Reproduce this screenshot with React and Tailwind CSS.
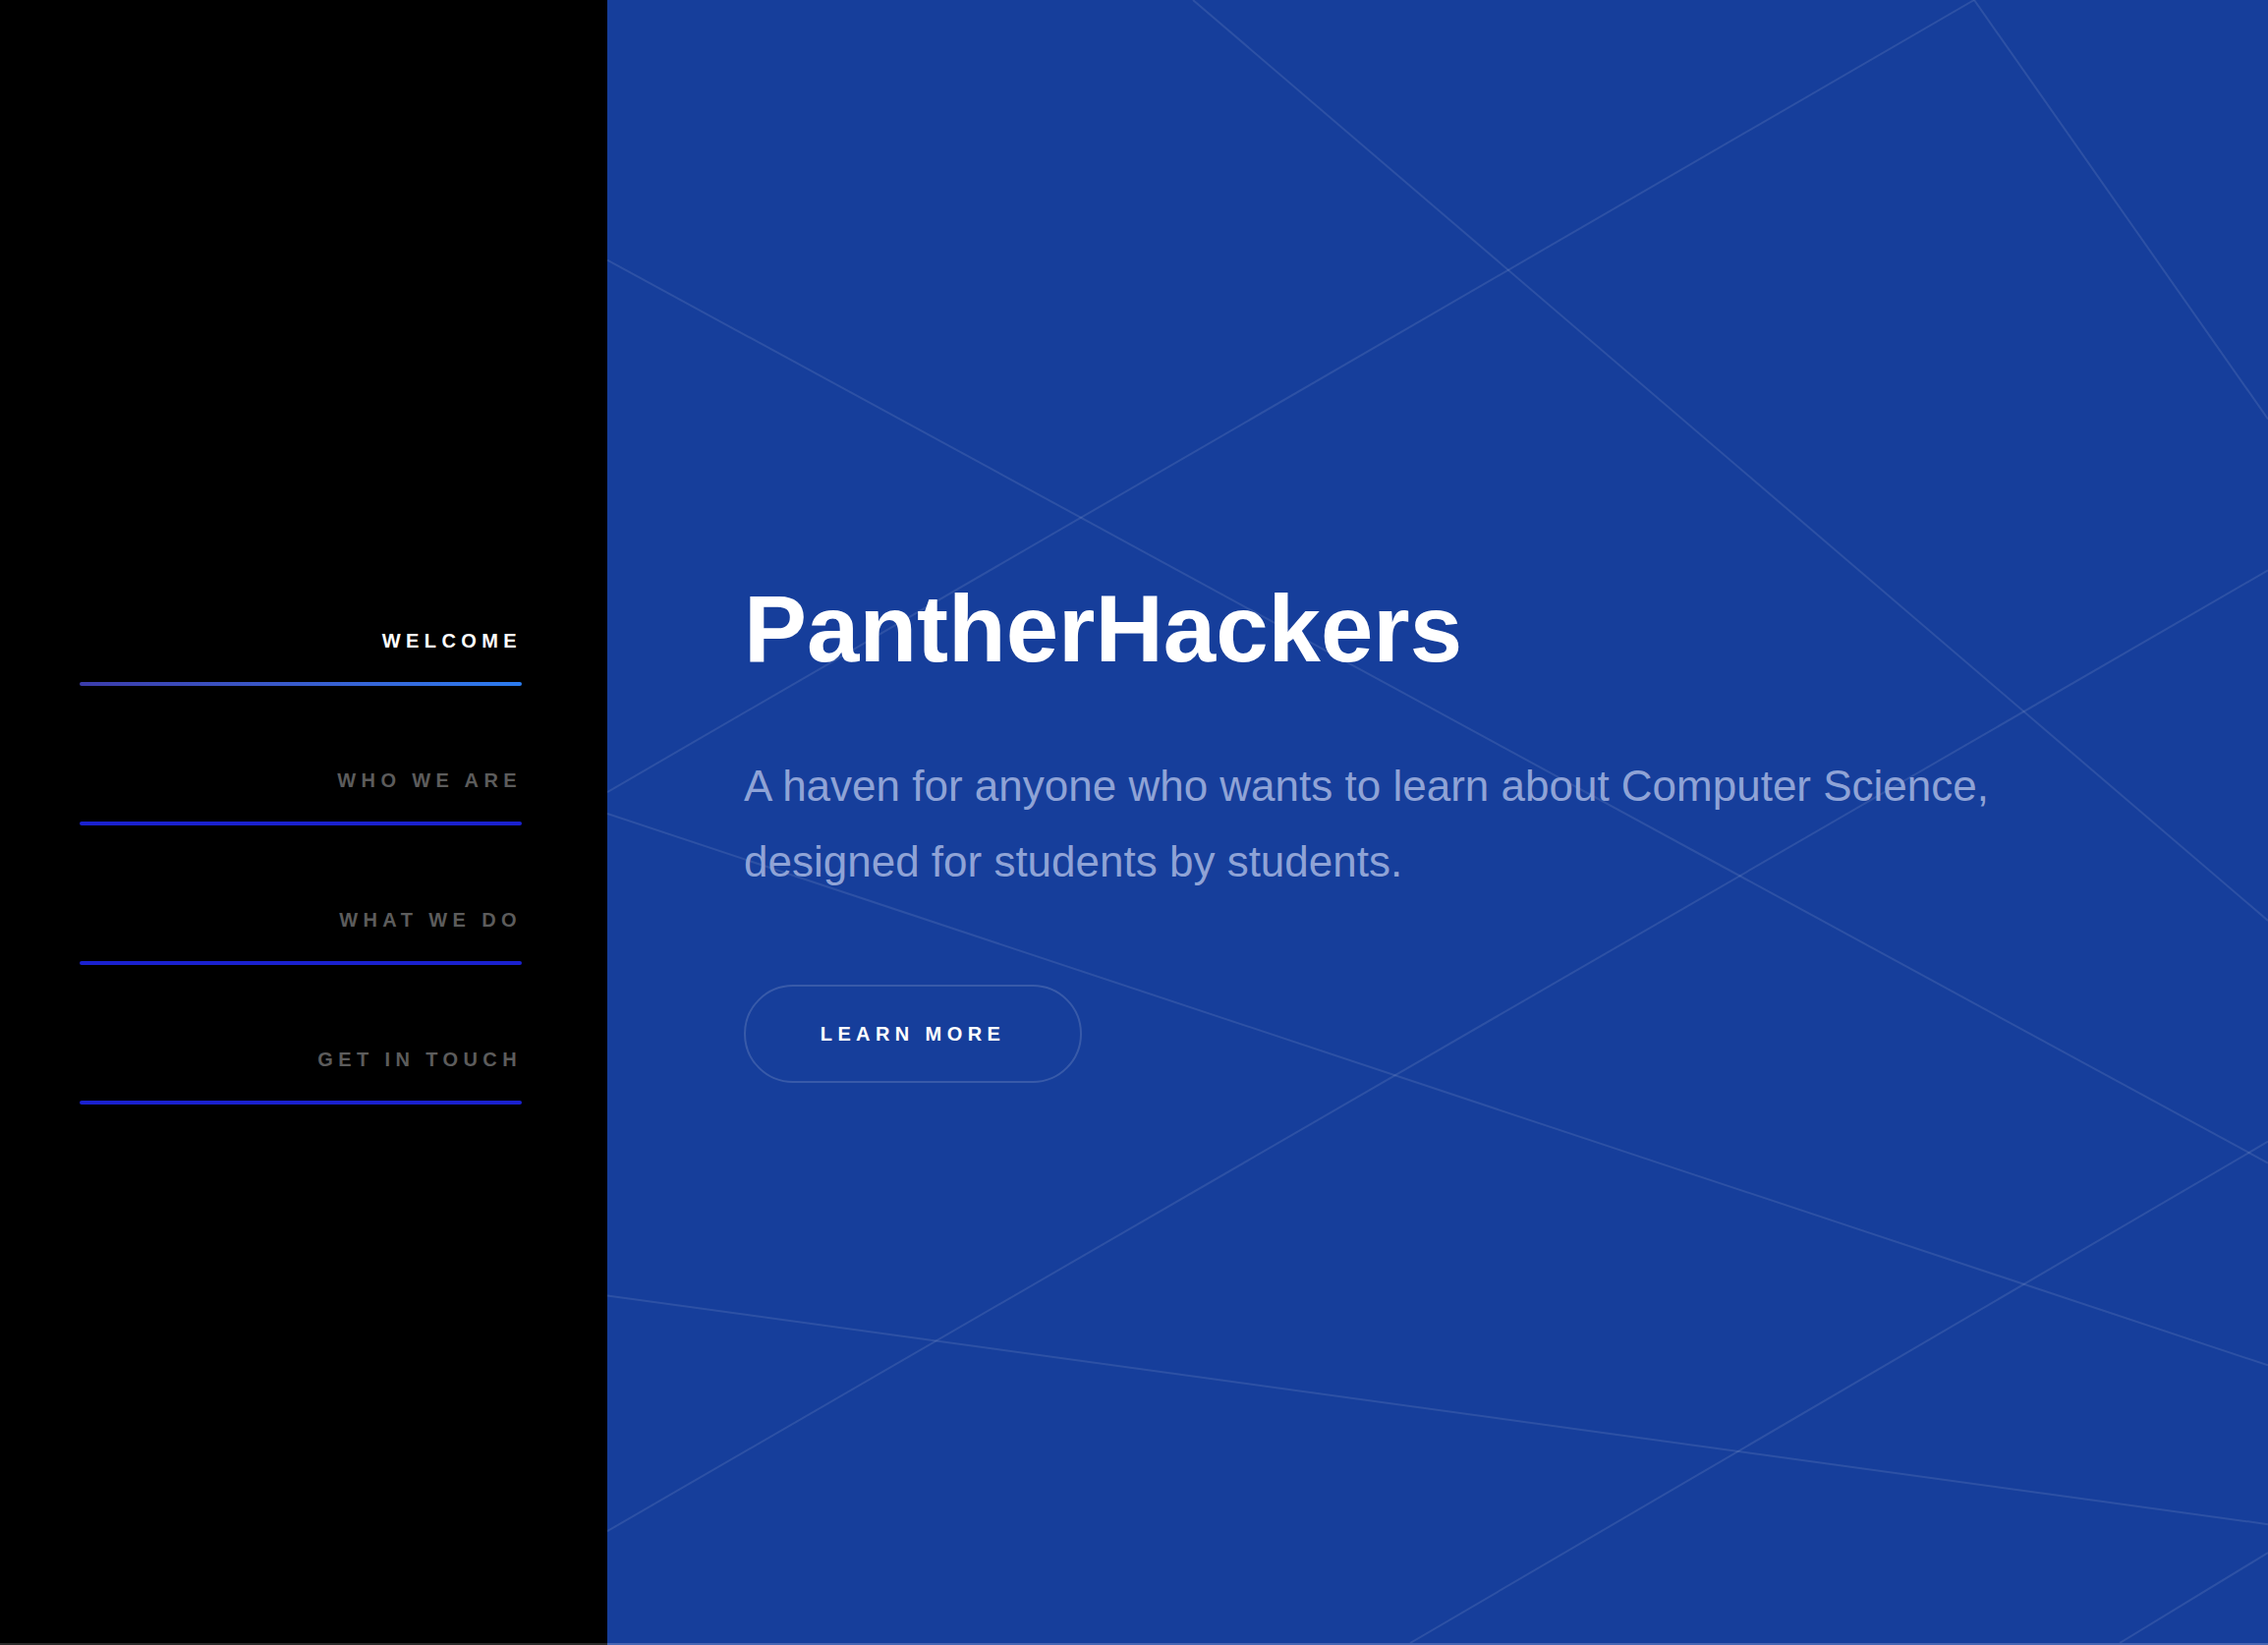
import React from 'react';

const navItems = [
  { label: 'WELCOME', active: true },
  { label: 'WHO WE ARE', active: false },
  { label: 'WHAT WE DO', active: false },
  { label: 'GET IN TOUCH', active: false },
];

// background strokes, in the coordinates of the blue panel (1690 x 1674)
const lines = [
  [596, 0, 1690, 938],
  [1391, 0, 1690, 427],
  [1391, 0, 0, 807],
  [0, 265, 1690, 1185],
  [0, 829, 1690, 1391],
  [1690, 581, 0, 1560],
  [0, 1320, 1690, 1553],
  [1690, 1163, 817, 1674],
  [1690, 1582, 1539, 1674],
];

const Sidebar = () => (
  <aside className="w-[618px] shrink-0 h-full bg-black flex flex-col pt-[641px] pl-[81px]">
    <nav className="w-[450px] flex flex-col gap-[85px]">
      {navItems.map(item => (
        <a key={item.label} href="#" className="flex flex-col">
          <span
            className={`text-right text-[20px] leading-[23px] font-bold tracking-[0.27em] mb-[30px] ${
              item.active ? 'text-white' : 'text-[#5c5c5c]'
            }`}
          >
            {item.label}
          </span>
          <span
            className={`h-[4px] rounded-full ${
              item.active ? 'bg-gradient-to-r from-[#3b3cab] to-[#2b7cf0]' : 'bg-[#1a21cf]'
            }`}
          />
        </a>
      ))}
    </nav>
  </aside>
);

const Hero = () => (
  <main className="relative flex-1 h-full bg-[#163e9b] overflow-hidden">
    <svg
      className="absolute inset-0 w-full h-full"
      viewBox="0 0 1690 1674"
      preserveAspectRatio="none"
    >
      {lines.map(([x1, y1, x2, y2], i) => (
        <line key={i} x1={x1} y1={y1} x2={x2} y2={y2} stroke="rgba(255,255,255,0.1)" strokeWidth="2" />
      ))}
    </svg>

    <div className="relative h-full flex flex-col justify-center items-start pl-[139px] pt-[22px]">
      <h1 className="text-[96px] leading-none font-bold text-white">PantherHackers</h1>
      <p className="mt-[73px] text-[44px] leading-[77px] text-[#8fa3d6]">
        A haven for anyone who wants to learn about Computer Science,
        <br />
        designed for students by students.
      </p>
      <button className="mt-[87px] w-[344px] h-[100px] rounded-full border-2 border-white/15 text-white text-[20px] font-bold tracking-[0.27em]">
        LEARN MORE
      </button>
    </div>
  </main>
);

export default function App() {
  return (
    <div className="w-full h-[1674px] flex flex-col font-['Liberation_Sans',Arial,sans-serif]">
      <div className="flex flex-1 min-h-0">
        <Sidebar />
        <Hero />
      </div>
      <div className="flex h-[2px]">
        <div className="w-[618px] bg-[#2a2a2a]" />
        <div className="flex-1 bg-[#4766b3]" />
      </div>
    </div>
  );
}
